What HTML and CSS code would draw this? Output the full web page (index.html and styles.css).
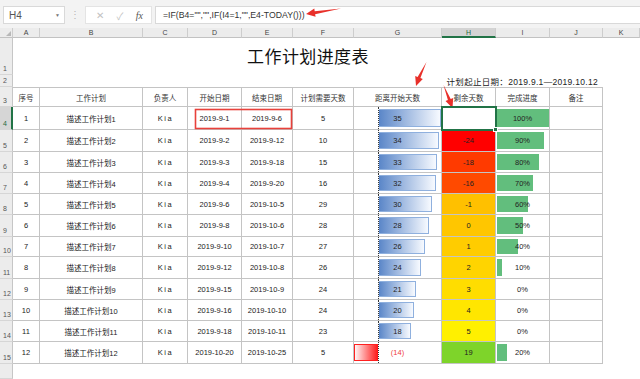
FILE: index.html
```html
<!DOCTYPE html>
<html lang="zh-CN">
<head>
  <meta charset="UTF-8">
  <meta name="viewport" content="width=device-width, initial-scale=1.0">
  <title>工作计划进度表</title>
  <link rel="stylesheet" href="styles.css">
</head>
<body>

  <div class="toolbar">
    <div class="namebox"><span>H4</span><span class="caret">▼</span></div>
    <div class="dots">⋮</div>
    <div class="fxbox">
      <span class="cancel">✕</span>
      <span class="enter">✓</span>
      <span class="fx">fx</span>
    </div>
    <div class="formula">=IF(B4="","",IF(I4=1,"",E4-TODAY()))</div>
  </div>

  <div class="sheet" id="sheet">
    <div class="row colhead">
      <div class="corner"><span class="tri"></span></div>
      <div>A</div><div>B</div><div>C</div><div>D</div><div>E</div>
      <div>F</div><div>G</div><div class="active">H</div><div>I</div>
      <div>J</div><div>K</div>
    </div>

    <div class="row">
      <div class="rh">1</div>
      <div class="title">工作计划进度表</div>
    </div>

    <div class="row">
      <div class="rh">2</div>
      <div class="period">计划起止日期：2019.9.1—2019.10.12</div>
    </div>

    <div class="row thead">
      <div class="rh">3</div>
      <div class="c">序号</div>
      <div class="c">工作计划</div>
      <div class="c">负责人</div>
      <div class="c">开始日期</div>
      <div class="c">结束日期</div>
      <div class="c">计划需要天数</div>
      <div class="c">距离开始天数</div>
      <div class="c">剩余天数</div>
      <div class="c">完成进度</div>
      <div class="c">备注</div>
    </div>

    <div class="row last">
      <div class="rh"></div>
    </div>
  </div>

  <svg class="marks" width="640" height="379" viewBox="0 0 640 379">
    <rect x="195.5" y="109.5" width="96" height="19" fill="none" stroke="#e8413b" stroke-width="1.6"/>
    <polygon fill="#e8302a" points="341,8.5 314.7,11.2 314.3,8.6 306,14 315.6,16.8 315.1,14.2"/>
    <polygon fill="#e8302a" points="426.5,62 420.4,78.1 422.8,79.1 416,86 415.2,76.1 417.6,77"/>
    <polygon fill="#e8302a" points="443.5,85 450.7,99 453.2,98.1 452.5,108 445.5,100.9 447.9,100"/>
  </svg>

  <script>
    const data = [
      [1, '2019-9-1', '2019-9-6', 5, 35, '', 100],
      [2, '2019-9-2', '2019-9-12', 10, 34, -24, 90],
      [3, '2019-9-3', '2019-9-18', 15, 33, -18, 80],
      [4, '2019-9-4', '2019-9-20', 16, 32, -16, 70],
      [5, '2019-9-6', '2019-10-5', 29, 30, -1, 60],
      [6, '2019-9-8', '2019-10-6', 28, 28, 0, 50],
      [7, '2019-9-10', '2019-10-7', 27, 26, 1, 40],
      [8, '2019-9-12', '2019-10-8', 26, 24, 2, 10],
      [9, '2019-9-15', '2019-10-9', 24, 21, 3, 0],
      [10, '2019-9-16', '2019-10-10', 24, 20, 4, 0],
      [11, '2019-9-18', '2019-10-11', 23, 18, 5, 0],
      [12, '2019-10-20', '2019-10-25', 5, -14, 19, 20]
    ];

    // colour scale of the remaining-days column
    const heat = ['#ffffff', '#ff0000', '#ff3a00', '#ff4a00', '#ffc000', '#ffc600',
                  '#ffcc00', '#ffd400', '#ffdd00', '#ffe600', '#fff000', '#7ed42a'];

    const sheet = document.getElementById('sheet');
    const lastRow = sheet.querySelector('.last');

    data.forEach(function(d, i) {
      const row = document.createElement('div');
      row.className = 'row data';

      let track;
      if (d[4] >= 0) {
        track = '<div class="neg"></div><div class="pos"><div class="bar blue" style="width:' +
          Math.round(d[4] * 1.77) + 'px"></div></div>';
      } else {
        track = '<div class="neg"><div class="bar red" style="width:' +
          Math.round(-d[4] * 1.75) + 'px"></div></div><div class="pos"></div>';
      }
      const startText = d[4] >= 0 ? d[4] : '(' + (-d[4]) + ')';

      row.innerHTML =
        '<div class="rh' + (i === 0 ? ' cur' : '') + '">' + (i + 4) + '</div>' +
        '<div class="c">' + d[0] + '</div>' +
        '<div class="c">描述工作计划' + d[0] + '</div>' +
        '<div class="c kia">Kia</div>' +
        '<div class="c">' + d[1] + '</div>' +
        '<div class="c">' + d[2] + '</div>' +
        '<div class="c">' + d[3] + '</div>' +
        '<div class="c stack"><div class="track">' + track + '</div>' +
          '<div class="val' + (d[4] < 0 ? ' minus' : '') + '">' + startText + '</div></div>' +
        '<div class="c' + (i === 0 ? ' sel' : '') + '" style="background:' + heat[i] + '">' + d[5] +
          (i === 0 ? '<span class="handle"></span>' : '') + '</div>' +
        '<div class="c stack"><div class="track green-track"><div class="bar green" style="width:' +
          Math.round(d[6] * 0.52) + 'px"></div></div><div class="val">' + d[6] + '%</div></div>' +
        '<div class="c"></div>';

      sheet.insertBefore(row, lastRow);
    });
  </script>

</body>
</html>
```

FILE: styles.css
```css
* {
  box-sizing: border-box;
}

body {
  margin: 0;
  width: 640px;
  height: 379px;
  overflow: hidden;
  position: relative;
  background-color: #fff;
  font-family: "Liberation Sans", "Noto Sans CJK SC", sans-serif;
  color: #222;
}

/* formula bar */
.toolbar {
  height: 28px;
  display: flex;
  align-items: flex-start;
  padding-top: 6px;
  background-color: #f3f3f3;
}

.namebox {
  margin-left: 3px;
  width: 62px;
  height: 18px;
  display: flex;
  align-items: center;
  justify-content: space-between;
  padding: 0 4px 0 5px;
  background-color: #fff;
  border: 1px solid #d9d9d9;
  font-size: 10px;
  color: #555;
}

.caret {
  font-size: 5px;
  color: #777;
}

.dots {
  width: 20px;
  line-height: 18px;
  text-align: center;
  font-size: 10px;
  color: #b5b5b5;
}

.fxbox {
  width: 67px;
  height: 18px;
  display: flex;
  align-items: center;
  justify-content: space-around;
  padding: 0 2px 0 4px;
  background-color: #fff;
  border: 1px solid #e4e4e4;
  font-size: 10px;
  color: #c2c2c2;
}

.fx {
  font-family: "Liberation Serif", serif;
  font-style: italic;
  color: #555;
}

.formula {
  flex: 1;
  height: 18px;
  margin-left: 3px;
  padding-left: 7px;
  background-color: #fff;
  border: 1px solid #d9d9d9;
  border-right: none;
  font-size: 8.7px;
  line-height: 16px;
  color: #333;
}

/* worksheet */
.sheet {
  display: grid;
  grid-template-rows: 10px 37px 12px 20px 23px 22px 21px 21px 21px 22px 20px 22px 21px 21px 21px 22px 1fr;
  height: 351px;
}

.row {
  display: grid;
  grid-template-columns: 13px 27px 103px 45px 54px 51px 61px 88px 54px 54px 53px 37px;
}

.colhead > div {
  display: flex;
  align-items: center;
  justify-content: center;
  background-color: #ececec;
  border-right: 1px solid #cdcdcd;
  border-bottom: 1px solid #c2c2c2;
  font-size: 7px;
  color: #444;
}

.colhead .active {
  background-color: #d4d4d4;
  border-bottom: 2px solid #217346;
  color: #1e6b40;
}

.colhead .corner {
  align-items: flex-end;
  justify-content: flex-end;
  padding: 0 1px 1px 0;
}

.tri {
  width: 0;
  height: 0;
  border-left: 5px solid transparent;
  border-bottom: 5px solid #b8b8b8;
}

.rh {
  display: flex;
  align-items: flex-end;
  padding: 0 0 2px 3px;
  background-color: #ececec;
  border-right: 1px solid #c6c6c6;
  border-bottom: 1px solid #d6d6d6;
  font-size: 7px;
  color: #555;
}

.rh.cur {
  background-color: #d6d6d6;
  border-right: 2px solid #217346;
  color: #1e6b40;
}

.title {
  grid-column: 2 / 12;
  display: flex;
  align-items: center;
  justify-content: center;
  padding-bottom: 2px;
  font-family: "Noto Sans CJK SC", sans-serif;
  font-size: 17px;
  letter-spacing: 0.4px;
  color: #111;
}

.period {
  grid-column: 2 / 12;
  display: flex;
  align-items: center;
  justify-content: flex-end;
  padding-right: 5px;
  font-size: 8.5px;
  letter-spacing: 0.3px;
  color: #222;
}

/* table cells */
.c {
  display: flex;
  align-items: center;
  justify-content: center;
  border-right: 1px solid #c4c4c4;
  border-bottom: 1px solid #c4c4c4;
  font-size: 7.5px;
  color: #222;
  white-space: nowrap;
}

.thead .c {
  border-top: 1px solid #c4c4c4;
  color: #333;
}

.kia {
  letter-spacing: 1.5px;
  padding-left: 1px;
}

.sel {
  position: relative;
  z-index: 1;
  outline: 2px solid #217346;
  outline-offset: -1px;
}

.handle {
  position: absolute;
  right: -3px;
  bottom: -3px;
  width: 5px;
  height: 5px;
  background-color: #217346;
  border: 1px solid #fff;
}

/* data bars: track and label share one grid area */
.stack {
  display: grid;
  grid-template-columns: 1fr;
  grid-template-rows: 1fr;
  align-items: stretch;
  justify-items: stretch;
}

.track,
.val {
  grid-area: 1 / 1;
}

.val {
  place-self: center;
}

.val.minus {
  color: #f03c3c;
}

.track {
  display: flex;
}

.neg {
  width: 25px;
  display: flex;
  justify-content: flex-end;
  border-right: 1px dotted #333;
}

.pos {
  flex: 1;
  display: flex;
}

.bar {
  margin: 2px 0 2px;
}

.bar.blue {
  background: linear-gradient(to right, #5a86c8, #f7faff);
  border: 1px solid #8fb0de;
  border-left: none;
}

.bar.red {
  background: linear-gradient(to right, #fff4f4, #ff1414);
  border: 1px solid #ff2020;
  border-right: none;
}

.green-track {
  padding-left: 1px;
}

.bar.green {
  background-color: #62be7d;
}

/* annotations drawn over the sheet */
.marks {
  position: absolute;
  left: 0;
  top: 0;
  pointer-events: none;
}
```
